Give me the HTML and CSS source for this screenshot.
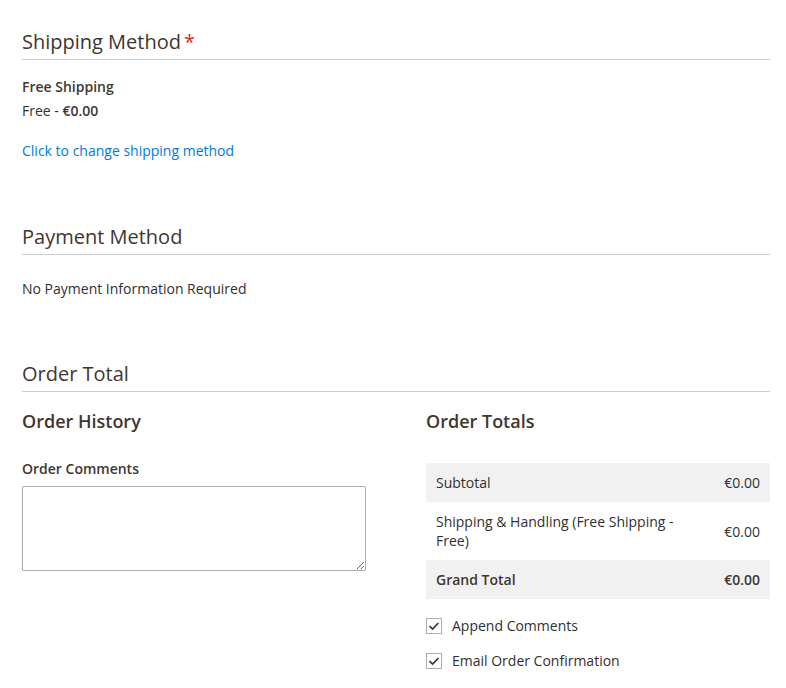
FILE: index.html
```html
<!DOCTYPE html>
<html lang="en">
<head>
<meta charset="utf-8">
<title>Order</title>
<link rel="stylesheet" href="styles.css">
</head>
<body>
<div class="page">
  <section class="section">
    <h2 class="section-title required">Shipping Method</h2>
    <div class="method-name">Free Shipping</div>
    <div class="method-price">Free - <strong>€0.00</strong></div>
    <a class="change-link" href="#">Click to change shipping method</a>
  </section>

  <section class="section section-gap">
    <h2 class="section-title">Payment Method</h2>
    <div class="payment-note">No Payment Information Required</div>
  </section>

  <section class="section section-gap-last">
    <h2 class="section-title">Order Total</h2>
    <div class="columns">
      <div class="col">
        <h3 class="col-title">Order History</h3>
        <label class="field-label" for="comments">Order Comments</label>
        <textarea id="comments" class="comments"></textarea>
      </div>
      <div class="col">
        <h3 class="col-title">Order Totals</h3>
        <table class="totals">
          <tbody>
            <tr class="row-shaded">
              <td class="total-label">Subtotal</td>
              <td class="total-amount">€0.00</td>
            </tr>
            <tr>
              <td class="total-label">Shipping &amp; Handling (Free Shipping - Free)</td>
              <td class="total-amount">€0.00</td>
            </tr>
            <tr class="row-shaded row-grand">
              <td class="total-label">Grand Total</td>
              <td class="total-amount">€0.00</td>
            </tr>
          </tbody>
        </table>
        <div class="checks">
          <label class="check">
            <span class="box"><svg viewBox="0 0 16 16" width="16" height="16"><path d="M3.5 8.2 L6.6 11.1 L12.4 5" fill="none" stroke="#41362f" stroke-width="1.8"/></svg></span>
            <span>Append Comments</span>
          </label>
          <label class="check">
            <span class="box"><svg viewBox="0 0 16 16" width="16" height="16"><path d="M3.5 8.2 L6.6 11.1 L12.4 5" fill="none" stroke="#41362f" stroke-width="1.8"/></svg></span>
            <span>Email Order Confirmation</span>
          </label>
        </div>
      </div>
    </div>
  </section>
</div>
</body>
</html>
```

FILE: styles.css
```css
* { box-sizing: border-box; }

body {
  margin: 0;
  background: #ffffff;
  font-family: "Open Sans", "Liberation Sans", sans-serif;
  font-size: 14px;
  line-height: 20px;
  color: #303030;
}

.page {
  padding: 30px 16px 0 22px;
}

.section-gap {
  margin-top: 64px;
}

.section-gap-last {
  margin-top: 63px;
}

.section-title {
  margin: 0;
  font-size: 20px;
  line-height: 24px;
  font-weight: 400;
  color: #41362f;
  padding-bottom: 5px;
  border-bottom: 1px solid #cccccc;
}

.required::after {
  content: "*";
  color: #e22626;
  margin-left: 3px;
}

.method-name {
  margin-top: 17px;
  font-weight: 600;
  color: #41362f;
}

.method-price {
  margin-top: 4px;
}

.method-price strong {
  font-weight: 600;
  color: #41362f;
}

.change-link {
  display: block;
  margin-top: 20px;
  color: #007bdb;
  text-decoration: none;
}

.payment-note {
  margin-top: 24px;
}

.columns {
  display: grid;
  grid-template-columns: 344px 344px;
  column-gap: 60px;
  margin-top: 17px;
}

.col-title {
  margin: 0;
  font-size: 18px;
  line-height: 24px;
  font-weight: 600;
  color: #41362f;
}

.field-label {
  display: block;
  margin-top: 26px;
  font-weight: 600;
  color: #41362f;
}

.comments {
  display: block;
  margin-top: 7px;
  width: 344px;
  height: 85px;
  border: 1px solid #adadad;
  border-radius: 1px;
  padding: 6px 10px;
  font-family: inherit;
  font-size: 14px;
  background: #ffffff;
}

.totals {
  margin-top: 30px;
  width: 344px;
  border-collapse: collapse;
  table-layout: fixed;
}

.totals td {
  padding: 10px;
  line-height: 19px;
  vertical-align: middle;
}

.total-label {
  width: 275px;
  text-align: left;
}

.total-amount {
  text-align: right;
}

.row-shaded {
  background: #f1f1f1;
}

.row-grand td {
  font-weight: 600;
  color: #41362f;
}

.checks {
  margin-top: 17px;
  display: flex;
  flex-direction: column;
  gap: 15px;
}

.check {
  display: flex;
  align-items: center;
  gap: 10px;
  height: 20px;
}

.box {
  display: block;
  width: 16px;
  height: 16px;
  border: 1px solid #adadad;
  background: #ffffff;
  position: relative;
}

.box svg {
  position: absolute;
  left: -1px;
  top: -1px;
}
```
